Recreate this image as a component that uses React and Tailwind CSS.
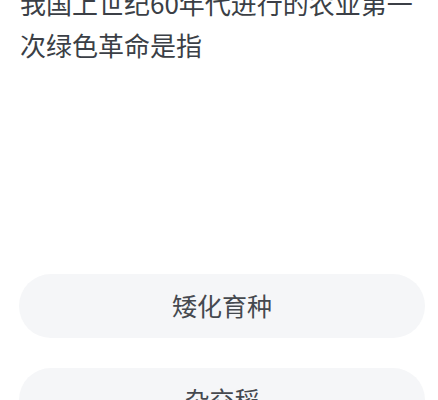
import React from "react";

const options = ["矮化育种", "杂交稻", "转基因技术"];

export default function App() {
  return (
    <div
      className="w-[438px] h-[400px] overflow-hidden bg-white"
      style={{ fontFamily: '"Noto Sans CJK SC", "Noto Sans", sans-serif' }}
    >
      {/* Question */}
      <div className="px-5 -mt-[18px]">
        <p className="text-[26px] leading-[42px] text-[#3b3f46]">
          我国上世纪60年代进行的农业第一次绿色革命是指
        </p>
      </div>

      {/* Options */}
      <div className="mt-[208px] pl-[19px] pr-[13px] flex flex-col gap-[30px]">
        {options.map((o) => (
          <div
            key={o}
            className="h-[64px] rounded-full bg-[#f5f6f8] flex items-center justify-center text-[25px] text-[#45494f]"
          >
            {o}
          </div>
        ))}
      </div>
    </div>
  );
}
